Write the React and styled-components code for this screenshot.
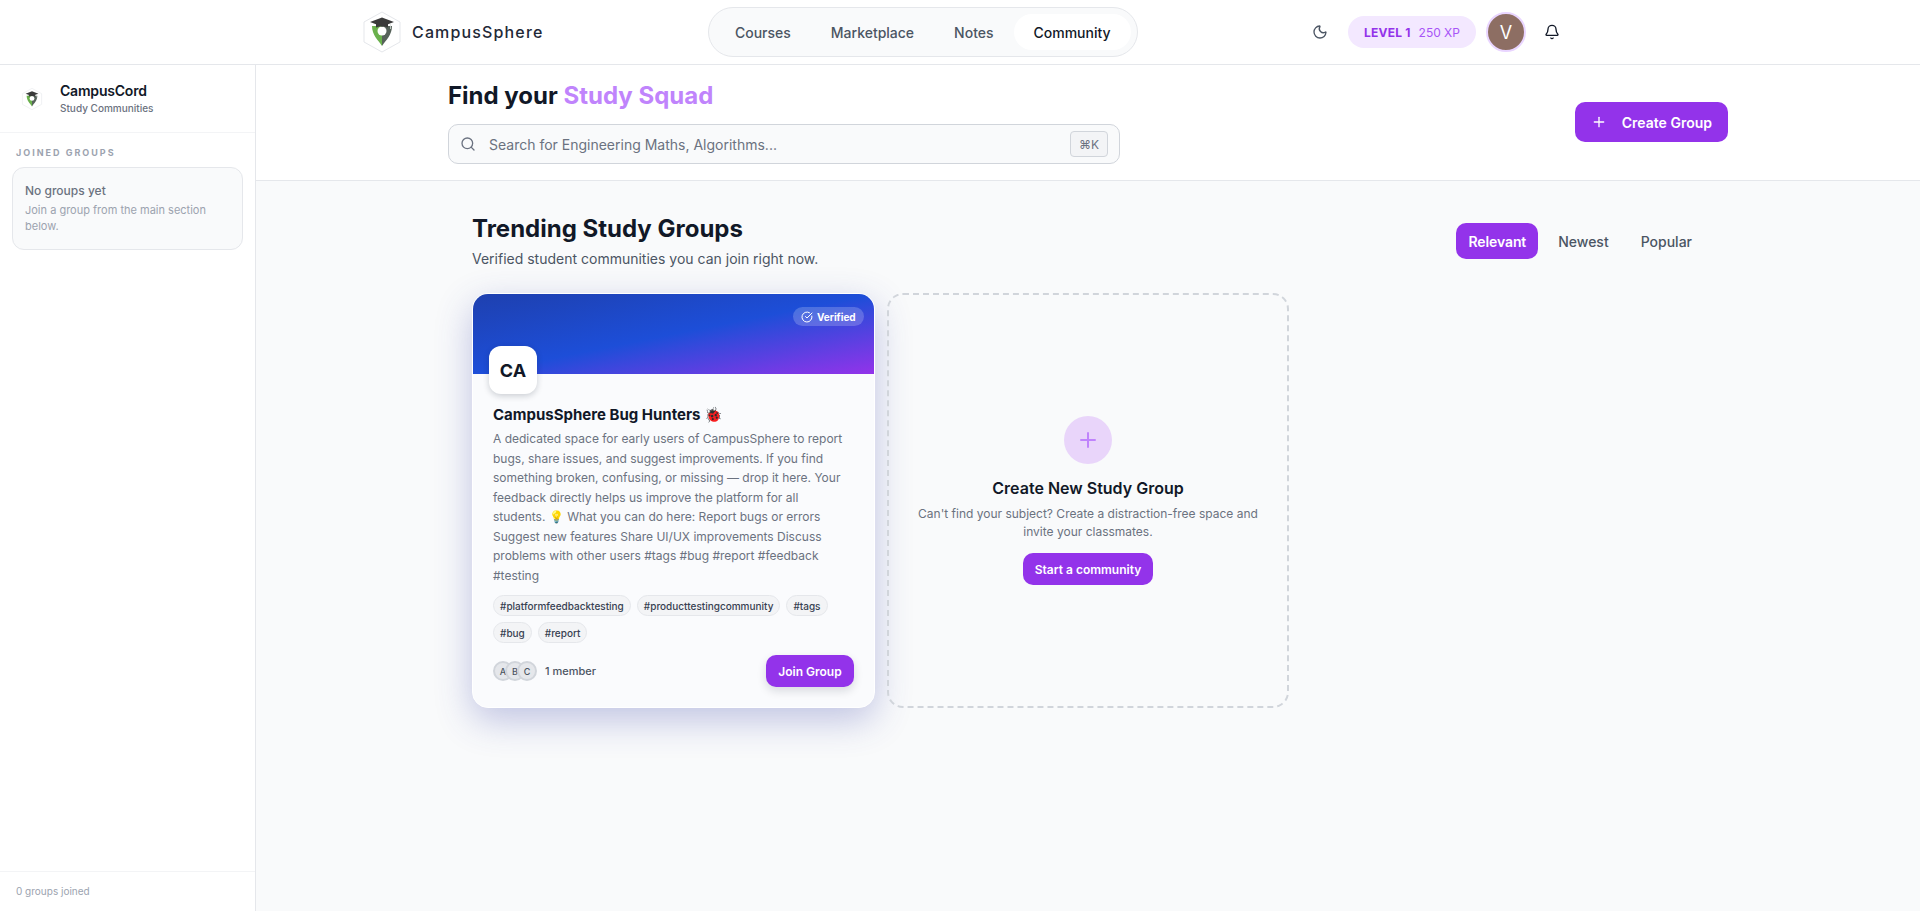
import React from "react";
import styled, { createGlobalStyle } from "styled-components";
import { Bell, CircleCheckBig, Moon, Plus, Search } from "lucide-react";

const GlobalStyle = createGlobalStyle`
  html, body {
    margin: 0;
    height: 100%;
    background: #f9fafb;
    font-family: Inter, "Noto Sans", sans-serif;
    color: #111827;
  }
  * { box-sizing: border-box; }
`;

const Page = styled.div`
  height: 100vh;
  display: flex;
  flex-direction: column;
  overflow: hidden;
`;

const TopBar = styled.header`
  height: 65px;
  flex: none;
  background: #fff;
  border-bottom: 1px solid #e5e7eb;
`;

const TopBarInner = styled.div`
  max-width: 1280px;
  height: 64px;
  margin: 0 auto;
  padding: 0 32px;
  display: flex;
  align-items: center;
  justify-content: space-between;
`;

const Brand = styled.div`
  display: flex;
  align-items: center;
  font-size: 16px;
  font-weight: 500;
  letter-spacing: 1.15px;
  color: #1f2937;
`;

const NavPill = styled.nav`
  display: flex;
  align-items: center;
  height: 50px;
  padding: 0 6px;
  background: #f9fafb;
  border: 1px solid #e5e7eb;
  border-radius: 25px;
`;

const NavItem = styled.a`
  height: 36px;
  padding: 0 20px;
  display: flex;
  align-items: center;
  font-size: 14px;
  font-weight: 500;
  border-radius: 18px;
  color: ${(p) => (p.$active ? "#111827" : "#4b5563")};
  background: ${(p) => (p.$active ? "#fff" : "transparent")};
`;

const UserArea = styled.div`
  display: flex;
  align-items: center;
  gap: 10px;
`;

const IconButton = styled.button`
  width: ${(p) => p.$size}px;
  height: ${(p) => p.$size}px;
  padding: 0;
  border: 0;
  background: transparent;
  display: flex;
  align-items: center;
  justify-content: center;
  color: ${(p) => p.$color};
`;

const LevelPill = styled.div`
  height: 32px;
  padding: 0 16px;
  display: flex;
  align-items: center;
  gap: 8px;
  background: #f3e8ff;
  border-radius: 16px;
  font-size: 12px;
  color: #a855f7;
  b {
    font-weight: 700;
    letter-spacing: 0.2px;
    color: #9333ea;
  }
`;

const UserAvatar = styled.div`
  width: 40px;
  height: 40px;
  border-radius: 50%;
  border: 2px solid #e9d5ff;
  background: #8d6e63;
  color: #fff;
  font-size: 18px;
  display: flex;
  align-items: center;
  justify-content: center;
`;

const Body = styled.div`
  flex: 1;
  min-height: 0;
  display: flex;
`;

const Sidebar = styled.aside`
  width: 256px;
  flex: none;
  background: #fff;
  border-right: 1px solid #e5e7eb;
  display: flex;
  flex-direction: column;
`;

const SideHeader = styled.div`
  padding: 16px;
  display: flex;
  align-items: center;
  gap: 12px;
  border-bottom: 1px solid #f3f4f6;
`;

const SideTitle = styled.div`
  font-size: 14px;
  line-height: 20px;
  font-weight: 600;
  letter-spacing: -0.2px;
`;

const SideSub = styled.div`
  font-size: 10px;
  line-height: 15px;
  font-weight: 500;
  color: #6b7280;
`;

const SideSection = styled.div`
  padding: 12px;
`;

const SideLabel = styled.div`
  padding: 0 4px;
  margin-bottom: 7px;
  font-size: 9px;
  line-height: 15px;
  font-weight: 700;
  letter-spacing: 2px;
  color: #9ca3af;
`;

const EmptyCard = styled.div`
  padding: 12px 12px 15px;
  background: #f9fafb;
  border: 1px solid #e5e7eb;
  border-radius: 12px;
`;

const EmptyTitle = styled.div`
  font-size: 12px;
  line-height: 20px;
  margin-top: 1px;
  font-weight: 500;
  color: #6b7280;
`;

const EmptyText = styled.div`
  font-size: 11px;
  line-height: 16px;
  margin-top: 1px;
  color: #9ca3af;
`;

const SideFooter = styled.div`
  margin-top: auto;
  padding: 12px 16px;
  border-top: 1px solid #f3f4f6;
  font-size: 10px;
  line-height: 15px;
  color: #9ca3af;
`;

const Main = styled.main`
  flex: 1;
  min-width: 0;
`;

const SearchHeader = styled.div`
  background: #fff;
  border-bottom: 1px solid #e5e7eb;
`;

const SearchInner = styled.div`
  max-width: 1280px;
  margin: 0 auto;
  padding: 16px 0;
  display: flex;
  align-items: center;
  justify-content: space-between;
`;

const SearchColumn = styled.div`
  width: 672px;
`;

const PageTitle = styled.h1`
  margin: 0 0 13px;
  font-size: 24px;
  line-height: 30px;
  font-weight: 700;
  span {
    color: #c084fc;
  }
`;

const SearchBox = styled.div`
  height: 40px;
  padding: 0 5px 0 11px;
  display: flex;
  align-items: center;
  gap: 11px;
  background: #f9fafb;
  border: 1px solid #d1d5db;
  border-radius: 10px;
  color: #6b7280;
`;

const SearchInput = styled.input`
  flex: 1;
  min-width: 0;
  border: 0;
  outline: 0;
  background: transparent;
  font: 400 14px Inter, sans-serif;
  &::placeholder {
    color: #6b7280;
    opacity: 1;
  }
`;

const Kbd = styled.kbd`
  width: 38px;
  height: 26px;
  margin-right: 6px;
  display: flex;
  align-items: center;
  justify-content: center;
  background: #f3f4f6;
  border: 1px solid #d1d5db;
  border-radius: 4px;
  font: 400 12px Inter, "DejaVu Sans", sans-serif;
  color: #6b7280;
`;

const PrimaryButton = styled.button`
  height: ${(p) => (p.$large ? 40 : 32)}px;
  padding: 0 ${(p) => (p.$large ? 16 : 12)}px;
  margin-bottom: ${(p) => (p.$large ? 1 : 0)}px;
  display: inline-flex;
  align-items: center;
  justify-content: center;
  gap: 15px;
  border: 0;
  border-radius: 10px;
  background: #9333ea;
  color: #fff;
  font: 600 ${(p) => (p.$large ? 14 : 12)}px Inter, sans-serif;
  box-shadow: ${(p) => (p.$raised ? "0 4px 10px rgba(17, 24, 39, 0.14)" : "none")};
`;

const Content = styled.div`
  max-width: 1280px;
  margin: 0 auto;
  padding: 32px 24px;
`;

const ContentHeader = styled.div`
  margin-bottom: 24px;
  display: flex;
  align-items: center;
  justify-content: space-between;
`;

const SectionTitle = styled.h2`
  margin: 0 0 4px;
  font-size: 24px;
  line-height: 32px;
  font-weight: 700;
`;

const SectionSub = styled.p`
  margin: 0;
  font-size: 14px;
  line-height: 20px;
  color: #4b5563;
`;

const SortTabs = styled.div`
  display: flex;
  gap: 8px;
`;

const SortTab = styled.button`
  height: 36px;
  padding: 0 12px;
  border: 0;
  border-radius: 10px;
  background: ${(p) => (p.$active ? "#9333ea" : "transparent")};
  color: ${(p) => (p.$active ? "#fff" : "#4b5563")};
  font: ${(p) => (p.$active ? 600 : 500)} 14px Inter, sans-serif;
  letter-spacing: ${(p) => (p.$active ? "-0.1px" : "0")};
`;

const Grid = styled.div`
  display: grid;
  grid-template-columns: repeat(3, 1fr);
  gap: 12px;
`;

const GroupCard = styled.article`
  background: #fafbfd;
  border: 1px solid #fff;
  border-radius: 16px;
  overflow: hidden;
  box-shadow: 0 12px 36px rgba(55, 65, 170, 0.3);
`;

const Banner = styled.div`
  position: relative;
  height: 80px;
  background: linear-gradient(to bottom right, #1e40af 0%, #1d4ed8 50%, #9333ea 100%);
`;

const VerifiedBadge = styled.span`
  position: absolute;
  top: 13px;
  right: 10px;
  height: 19px;
  padding: 0 8px;
  display: flex;
  align-items: center;
  gap: 4px;
  border-radius: 10px;
  background: rgba(255, 255, 255, 0.2);
  color: #fff;
  font-size: 10px;
  font-weight: 700;
`;

const CardBody = styled.div`
  padding: 0 20px 20px;
`;

const GroupAvatar = styled.div`
  position: relative;
  width: 48px;
  height: 48px;
  margin: -28px 0 9px -4px;
  background: #fff;
  border-radius: 12px;
  box-shadow: 0 2px 6px rgba(17, 24, 39, 0.2);
  display: flex;
  align-items: center;
  justify-content: center;
  font-size: 18px;
  font-weight: 700;
`;

const GroupName = styled.h3`
  margin: 0 0 2px;
  font-size: 15px;
  line-height: 24px;
  font-weight: 700;
`;

const GroupText = styled.p`
  margin: 0;
  font-size: 12px;
  line-height: 19.5px;
  color: #6b7280;
`;

const TagList = styled.div`
  margin-top: 10px;
  display: flex;
  flex-wrap: wrap;
  gap: 6px;
`;

const Tag = styled.span`
  height: 21px;
  padding: 0 6px;
  display: flex;
  align-items: center;
  background: #f3f4f6;
  border: 1px solid #e5e7eb;
  border-radius: 11px;
  font-size: 10px;
  font-weight: 500;
  color: #374151;
`;

const CardFooter = styled.div`
  margin-top: 12px;
  display: flex;
  align-items: center;
  justify-content: space-between;
`;

const Members = styled.div`
  display: flex;
  align-items: center;
  gap: 8px;
  font-size: 11px;
  font-weight: 500;
  color: #4b5563;
`;

const MemberStack = styled.div`
  display: flex;
`;

const MemberDot = styled.span`
  width: 20px;
  height: 20px;
  margin-left: -8px;
  border-radius: 50%;
  border: 2px solid #d1d5db;
  background: #e5e7eb;
  color: #4b5563;
  font-size: 9px;
  display: flex;
  align-items: center;
  justify-content: center;
  &:first-child {
    margin-left: 0;
  }
`;

const CreateCard = styled.article`
  border: 2px dashed #d1d5db;
  border-radius: 16px;
  display: flex;
  flex-direction: column;
  align-items: center;
  justify-content: center;
  text-align: center;
`;

const PlusCircle = styled.div`
  width: 48px;
  height: 48px;
  margin-bottom: 12px;
  border-radius: 50%;
  background: #e9d5fa;
  color: #c084fc;
  display: flex;
  align-items: center;
  justify-content: center;
`;

const CreateTitle = styled.h3`
  margin: 0 0 5px;
  font-size: 16px;
  line-height: 24px;
  font-weight: 600;
`;

const CreateText = styled.p`
  width: 360px;
  margin: 0 0 12px;
  font-size: 12px;
  line-height: 18px;
  color: #6b7280;
`;

const CapLogo = ({ size }) => (
  <svg width={size} height={size} viewBox="0 0 60 60" style={{ flex: "none" }}>
    <path d="M30 10 48 20V40L30 50 12 40V20Z" fill="#fff" stroke="#e5e7eb" strokeWidth="1" />
    <path d="M20 24C20 33 26 38 30 44V24Z" fill="#6ab04c" />
    <path d="M40 24C40 33 34 38 30 44V24Z" fill="#56625a" />
    <circle cx="30" cy="29" r="4.5" fill="#fff" />
    <path d="M24 22V25.5C27 24 33 24 36 25.5V22Z" fill="#3a3a3a" />
    <path d="M30 15.5 42 20 30 24.5 18 20Z" fill="#3a3a3a" />
    <path d="M38.5 21.5V27" stroke="#d8dcd8" strokeWidth="0.8" />
  </svg>
);

const tags = ["#platformfeedbacktesting", "#producttestingcommunity", "#tags", "#bug", "#report"];

const App = () => {
  return (
    <Page>
      <GlobalStyle />
      <TopBar>
        <TopBarInner>
          <Brand>
            <CapLogo size={60} />
            CampusSphere
          </Brand>
          <NavPill>
            <NavItem>Courses</NavItem>
            <NavItem>Marketplace</NavItem>
            <NavItem>Notes</NavItem>
            <NavItem $active>Community</NavItem>
          </NavPill>
          <UserArea>
            <IconButton $size={36} $color="#4b5563">
              <Moon size={16} />
            </IconButton>
            <LevelPill>
              <b>LEVEL 1</b>
              250 XP
            </LevelPill>
            <UserAvatar>V</UserAvatar>
            <IconButton $size={32} $color="#111827">
              <Bell size={16} />
            </IconButton>
          </UserArea>
        </TopBarInner>
      </TopBar>

      <Body>
        <Sidebar>
          <SideHeader>
            <CapLogo size={32} />
            <div>
              <SideTitle>CampusCord</SideTitle>
              <SideSub>Study Communities</SideSub>
            </div>
          </SideHeader>
          <SideSection>
            <SideLabel>JOINED GROUPS</SideLabel>
            <EmptyCard>
              <EmptyTitle>No groups yet</EmptyTitle>
              <EmptyText>Join a group from the main section below.</EmptyText>
            </EmptyCard>
          </SideSection>
          <SideFooter>0 groups joined</SideFooter>
        </Sidebar>

        <Main>
          <SearchHeader>
            <SearchInner>
              <SearchColumn>
                <PageTitle>
                  Find your <span>Study Squad</span>
                </PageTitle>
                <SearchBox>
                  <Search size={16} />
                  <SearchInput placeholder="Search for Engineering Maths, Algorithms..." readOnly />
                  <Kbd>⌘K</Kbd>
                </SearchBox>
              </SearchColumn>
              <PrimaryButton $large>
                <Plus size={16} />
                Create Group
              </PrimaryButton>
            </SearchInner>
          </SearchHeader>

          <Content>
            <ContentHeader>
              <div>
                <SectionTitle>Trending Study Groups</SectionTitle>
                <SectionSub>Verified student communities you can join right now.</SectionSub>
              </div>
              <SortTabs>
                <SortTab $active>Relevant</SortTab>
                <SortTab>Newest</SortTab>
                <SortTab>Popular</SortTab>
              </SortTabs>
            </ContentHeader>

            <Grid>
              <GroupCard>
                <Banner>
                  <VerifiedBadge>
                    <CircleCheckBig size={12} />
                    Verified
                  </VerifiedBadge>
                </Banner>
                <CardBody>
                  <GroupAvatar>CA</GroupAvatar>
                  <GroupName>CampusSphere Bug Hunters 🐞</GroupName>
                  <GroupText>
                    A dedicated space for early users of CampusSphere to report bugs, share issues,
                    and suggest improvements. If you find something broken, confusing, or missing —
                    drop it here. Your feedback directly helps us improve the platform for all
                    students. 💡 What you can do here: Report bugs or errors Suggest new features
                    Share UI/UX improvements Discuss problems with other users #tags #bug #report
                    #feedback #testing
                  </GroupText>
                  <TagList>
                    {tags.map((tag) => (
                      <Tag key={tag}>{tag}</Tag>
                    ))}
                  </TagList>
                  <CardFooter>
                    <Members>
                      <MemberStack>
                        <MemberDot>A</MemberDot>
                        <MemberDot>B</MemberDot>
                        <MemberDot>C</MemberDot>
                      </MemberStack>
                      1 member
                    </Members>
                    <PrimaryButton $raised>Join Group</PrimaryButton>
                  </CardFooter>
                </CardBody>
              </GroupCard>

              <CreateCard>
                <PlusCircle>
                  <Plus size={24} />
                </PlusCircle>
                <CreateTitle>Create New Study Group</CreateTitle>
                <CreateText>
                  Can't find your subject? Create a distraction-free space and invite your
                  classmates.
                </CreateText>
                <PrimaryButton>Start a community</PrimaryButton>
              </CreateCard>
            </Grid>
          </Content>
        </Main>
      </Body>
    </Page>
  );
};

export default App;
